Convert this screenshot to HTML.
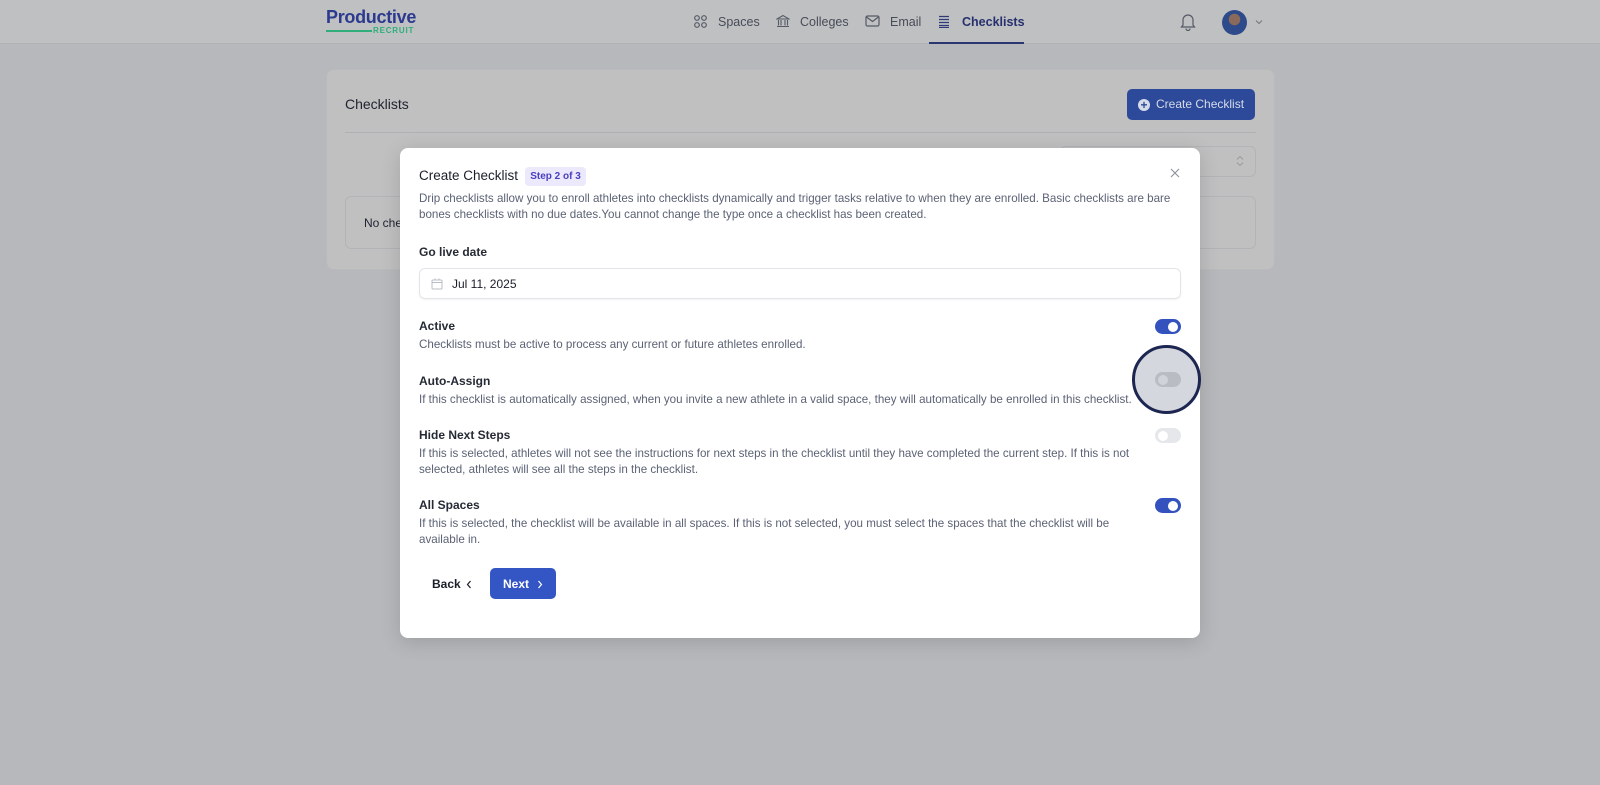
<!DOCTYPE html>
<html><head><meta charset="utf-8"><style>
*{box-sizing:border-box;margin:0;padding:0}
body{width:1600px;height:785px;background:#b6b8bb;font-family:"Liberation Sans",sans-serif;position:relative;overflow:hidden;color:#1b1f2a}
.abs{position:absolute}
.hdr{left:0;top:0;width:1600px;height:44px;background:#bfc0c1;border-bottom:1px solid #b0b2b5}
.nav{font-size:12.5px;color:#474c58;top:15px}
.card{left:326px;top:69px;width:949px;height:201px;background:#c0c0c1;border:1px solid #b9babc;border-radius:8px}
.modal{left:400px;top:148px;width:800px;height:490px;background:#fff;border-radius:8px;box-shadow:0 4px 20px rgba(0,0,0,.15)}
.lbl{font-size:12px;font-weight:bold;color:#262a35;left:19px}
.dsc{font-size:11.6px;color:#5b6274;left:19px;line-height:16px;width:730px}
.tg{width:26px;height:15px;border-radius:8px;left:755px}
.tg::after{content:"";position:absolute;top:2.5px;width:10px;height:10px;border-radius:50%;background:#fff}
.on{background:#3452bd}.on::after{right:3px}
.off{background:#e5e7eb}.off::after{left:3px}
</style></head><body>
<div class="abs hdr"></div>
<div class="abs" style="left:326px;top:7px;font-size:18px;font-weight:bold;color:#2b3a8f;letter-spacing:-0.3px">Productive</div>
<div class="abs" style="left:326px;top:30px;width:46px;height:1.5px;background:#2fae7b"></div>
<div class="abs" style="left:373px;top:26px;font-size:8px;font-weight:bold;color:#2fae7b;letter-spacing:0.8px">RECRUIT</div>
<svg class="abs" style="left:694px;top:15px" width="13" height="13" viewBox="0 0 13 13" fill="none" stroke="#555a66" stroke-width="1.2"><circle cx="3" cy="3" r="2.3"/><circle cx="10" cy="3" r="2.3"/><circle cx="3" cy="10" r="2.3"/><circle cx="10" cy="10" r="2.3"/></svg>
<div class="abs nav" style="left:718px">Spaces</div>
<svg class="abs" style="left:776px;top:14px" width="14" height="14" viewBox="0 0 14 14" fill="none" stroke="#555a66" stroke-width="1.1"><path d="M1 5L7 1.5L13 5H1ZM2.5 6v5.5M5 6v5.5M9 6v5.5M11.5 6v5.5M1 12.5h12"/></svg>
<div class="abs nav" style="left:800px">Colleges</div>
<svg class="abs" style="left:865px;top:15px" width="15" height="12" viewBox="0 0 15 12" fill="none" stroke="#555a66" stroke-width="1.2"><rect x="1" y="1" width="13" height="10" rx="1.5"/><path d="M1.5 2l6 4.5 6-4.5"/></svg>
<div class="abs nav" style="left:890px">Email</div>
<svg class="abs" style="left:938px;top:15px" width="12" height="13" viewBox="0 0 12 13" fill="none" stroke="#2f3a7a" stroke-width="1.2"><path d="M1 1.5h10M1 4.5h10M1 7.5h10M1 10.5h10M1 12.5h10"/></svg>
<div class="abs nav" style="left:962px;color:#27306e;font-weight:bold">Checklists</div>
<div class="abs" style="left:929px;top:42px;width:95px;height:2px;background:#2b3570"></div>
<svg class="abs" style="left:1180px;top:13px" width="16" height="18" viewBox="0 0 16 18" fill="none" stroke="#555a66" stroke-width="1.2"><path d="M3 12V7a5 5 0 0110 0v5l1.5 2h-13z"/><path d="M6 15.5a2 2 0 004 0"/></svg>
<div class="abs" style="left:1222px;top:10px;width:25px;height:25px;border-radius:50%;background:radial-gradient(circle at 50% 38%,#8a6a5a 0 28%,#2d4a8a 30%)"></div>
<svg class="abs" style="left:1255px;top:19px" width="8" height="6" viewBox="0 0 8 6" fill="none" stroke="#777" stroke-width="1"><path d="M1 1.5l3 3 3-3"/></svg>

<div class="abs card"></div>
<div class="abs" style="left:345px;top:96px;font-size:14px;color:#1f2330">Checklists</div>
<div class="abs" style="left:1127px;top:89px;width:128px;height:31px;background:#2d4a9a;border-radius:5px;color:#d6dbe8;font-size:12px;line-height:31px;padding-left:29px;white-space:nowrap">Create Checklist</div>
<div class="abs" style="left:1138px;top:99px;width:12px;height:12px;border-radius:50%;background:#d6dbe8;color:#2d4a9a;font-size:12px;line-height:12px;text-align:center;font-weight:bold">+</div>
<div class="abs" style="left:345px;top:132px;width:911px;height:1px;background:#aeb0b3"></div>
<div class="abs" style="left:1060px;top:146px;width:196px;height:31px;border:1px solid #b2b4b7;border-radius:6px"></div>
<svg class="abs" style="left:1236px;top:155px" width="8" height="12" viewBox="0 0 8 12" fill="none" stroke="#9a9ca0" stroke-width="1"><path d="M1 4.5l3-3 3 3M1 7.5l3 3 3-3"/></svg>
<div class="abs" style="left:345px;top:196px;width:911px;height:53px;border:1px solid #b2b4b7;border-radius:6px"></div>
<div class="abs" style="left:364px;top:216px;font-size:12px;color:#1f2330">No checklists</div>

<div class="abs modal">
 <div class="abs" style="left:19px;top:20px;font-size:13.5px;color:#1b1f2a">Create Checklist</div>
 <div class="abs" style="left:125px;top:19px;width:61px;height:19px;background:#ebe9fb;border-radius:4px;color:#4a3fbf;font-size:10px;font-weight:bold;text-align:center;line-height:19px">Step 2 of 3</div>
 <svg class="abs" style="left:770px;top:20px" width="10" height="10" viewBox="0 0 10 10" stroke="#8b909a" stroke-width="1.1"><path d="M1 1l8 8M9 1l-8 8"/></svg>
 <div class="abs dsc" style="top:43px;width:770px">Drip checklists allow you to enroll athletes into checklists dynamically and trigger tasks relative to when they are enrolled. Basic checklists are bare bones checklists with no due dates.You cannot change the type once a checklist has been created.</div>
 <div class="abs lbl" style="top:97px">Go live date</div>
 <div class="abs" style="left:19px;top:120px;width:762px;height:31px;border:1px solid #e3e5e9;border-radius:6px;box-shadow:0 1px 2px rgba(0,0,0,.05)"></div>
 <svg class="abs" style="left:31px;top:130px" width="12" height="12" viewBox="0 0 12 12" fill="none" stroke="#b8bcc4" stroke-width="1"><rect x="1" y="2" width="10" height="9" rx="1"/><path d="M1 4.5h10M4 0.5v2M8 0.5v2"/></svg>
 <div class="abs" style="left:52px;top:129px;font-size:12px;color:#1b1f2a">Jul 11, 2025</div>

 <div class="abs lbl" style="top:171px">Active</div>
 <div class="abs dsc" style="top:189px">Checklists must be active to process any current or future athletes enrolled.</div>
 <div class="abs tg on" style="top:171px"></div>

 <div class="abs lbl" style="top:226px">Auto-Assign</div>
 <div class="abs dsc" style="top:244px;width:780px">If this checklist is automatically assigned, when you invite a new athlete in a valid space, they will automatically be enrolled in this checklist.</div>
 <div class="abs" style="left:732px;top:197px;width:69px;height:69px;border-radius:50%;border:3px solid #1d2650;background:#d4d7de"></div>
 <div class="abs" style="left:755px;top:224px;width:26px;height:15px;border-radius:8px;background:#b9bcc3"></div>
 <div class="abs" style="left:758px;top:226.5px;width:10px;height:10px;border-radius:50%;background:#d0d3d9"></div>

 <div class="abs lbl" style="top:280px">Hide Next Steps</div>
 <div class="abs dsc" style="top:298px">If this is selected, athletes will not see the instructions for next steps in the checklist until they have completed the current step. If this is not selected, athletes will see all the steps in the checklist.</div>
 <div class="abs tg off" style="top:280px"></div>

 <div class="abs lbl" style="top:350px">All Spaces</div>
 <div class="abs dsc" style="top:368px">If this is selected, the checklist will be available in all spaces. If this is not selected, you must select the spaces that the checklist will be available in.</div>
 <div class="abs tg on" style="top:350px"></div>

 <div class="abs" style="left:32px;top:429px;font-size:12px;font-weight:bold;color:#1b1f2a">Back</div>
 <svg class="abs" style="left:66px;top:432px" width="6" height="9" viewBox="0 0 6 9" fill="none" stroke="#1b1f2a" stroke-width="1.2"><path d="M4.5 1L1.5 4.5 4.5 8"/></svg>
 <div class="abs" style="left:90px;top:420px;width:66px;height:31px;background:#3456c4;border-radius:5px"></div>
 <div class="abs" style="left:103px;top:429px;font-size:12px;font-weight:bold;color:#fff">Next</div>
 <svg class="abs" style="left:137px;top:432px" width="6" height="9" viewBox="0 0 6 9" fill="none" stroke="#fff" stroke-width="1.2"><path d="M1.5 1l3 3.5-3 3.5"/></svg>
</div>
</body></html>
